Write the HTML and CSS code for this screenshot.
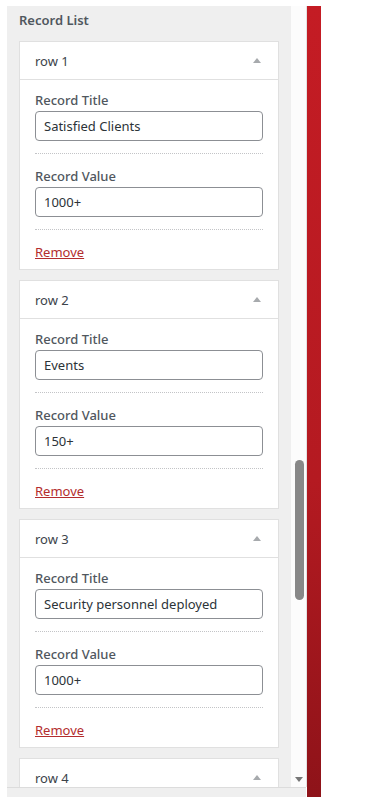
FILE: index.html
```html
<!DOCTYPE html>
<html>
	<head>
		<meta charset="utf-8" />
		<title>Record List</title>
		<link rel="stylesheet" href="styles.css">
	</head>
	<body>
	<div class="frame">
		<div class="panel-wrap">
			<div class="panel-row">
				<div class="panel">
					<h3 class="panel-title">Record List</h3>

					<div class="record">
						<div class="record-head">
							<span>row 1</span>
							<i class="caret"></i>
						</div>
						<div class="record-body">
							<div class="field">
								<label>Record Title</label>
								<input type="text" value="Satisfied Clients">
							</div>
							<div class="field">
								<label>Record Value</label>
								<input type="text" value="1000+">
							</div>
							<a href="#" class="remove">Remove</a>
						</div>
					</div>

					<div class="record">
						<div class="record-head">
							<span>row 2</span>
							<i class="caret"></i>
						</div>
						<div class="record-body">
							<div class="field">
								<label>Record Title</label>
								<input type="text" value="Events">
							</div>
							<div class="field">
								<label>Record Value</label>
								<input type="text" value="150+">
							</div>
							<a href="#" class="remove">Remove</a>
						</div>
					</div>

					<div class="record">
						<div class="record-head">
							<span>row 3</span>
							<i class="caret"></i>
						</div>
						<div class="record-body">
							<div class="field">
								<label>Record Title</label>
								<input type="text" value="Security personnel deployed">
							</div>
							<div class="field">
								<label>Record Value</label>
								<input type="text" value="1000+">
							</div>
							<a href="#" class="remove">Remove</a>
						</div>
					</div>

					<div class="record">
						<div class="record-head">
							<span>row 4</span>
							<i class="caret"></i>
						</div>
					</div>
				</div>
				<div class="vtrack">
					<div class="thumb"></div>
					<i class="arrow-down"></i>
				</div>
			</div>
			<div class="htrack"></div>
		</div>
		<div class="accent"></div>
	</div>
	</body>
</html>
```

FILE: styles.css
```css
*{margin: 0;padding: 0;box-sizing: border-box;}
body{background: #fff;font-family: "Noto Sans", "Open Sans", sans-serif;font-size: 13px;line-height: 18px;color: #50575e;}
.frame{display: flex;margin: 6px 0 0 7px;height: 791px;}
.panel-wrap{display: flex;flex-direction: column;width: 300px;}
.panel-row{display: flex;height: 781px;}
.panel{width: 284px;background: #efefef;padding: 5px 12px 0;overflow: hidden;}
.panel-title{font-size: 13px;font-weight: 600;line-height: 18px;color: #50575e;margin-bottom: 12px;}

.record{background: #fff;border: 1px solid #e0e0e0;margin-bottom: 10px;height: 229px;}
.record-head{height: 38px;border-bottom: 1px solid #e0e0e0;display: flex;align-items: center;justify-content: space-between;padding: 0 17px 0 15px;color: #3c434a;}
.caret{width: 0;height: 0;border-left: 4px solid transparent;border-right: 4px solid transparent;border-bottom: 5px solid #a7aaad;}
.record-body{padding: 11px 15px 0;}
.field{border-bottom: 1px dotted #c3c4c7;padding-bottom: 12px;margin-bottom: 13px;}
.field label{display: block;font-weight: 500;margin-bottom: 2px;}
.field input{display: block;width: 100%;height: 30px;border: 1px solid #8c8f94;border-radius: 4px;padding: 0 8px;font: inherit;color: #2c3338;background: #fff;}
.remove{color: #b32d2e;text-decoration: underline;}

.vtrack{width: 16px;background: #fcfcfc;border-right: 1px solid #e2e2e2;display: flex;flex-direction: column;align-items: center;}
.thumb{width: 9px;height: 140px;margin-top: 454px;margin-left: 1px;border-radius: 5px;background: #888;}
.arrow-down{margin-top: auto;margin-bottom: 5px;margin-left: 1px;width: 0;height: 0;border-left: 4px solid transparent;border-right: 4px solid transparent;border-top: 5px solid #777;}
.htrack{height: 10px;background: #efefef;border-top: 1px solid #dcdcdc;width: 299px;}
.accent{width: 14px;background: linear-gradient(#c41c24, #b41a21 60%, #8e1319);}
```
